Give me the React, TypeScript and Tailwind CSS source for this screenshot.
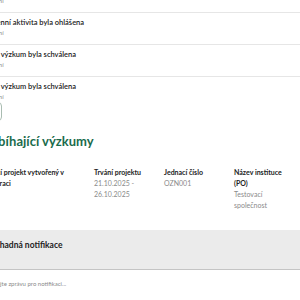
import React from 'react';

const notifications = [
  { title: 'Systémová aktualizace', meta: 'Upozornění' },
  { title: 'Zadržovenní aktivita byla ohlášena', meta: 'Upozornění' },
  { title: 'Žádost o výzkum byla schválena', meta: 'Upozornění' },
  { title: 'Žádost o výzkum byla schválena', meta: 'Upozornění' },
];

const columns = [
  { label: 'Testovací projekt vytvořený v administraci', value: '' },
  { label: 'Trvání projektu', value: '21.10.2025 - 26.10.2025' },
  { label: 'Jednací číslo', value: 'OZN001' },
  { label: 'Název instituce (PO)', value: 'Testovací společnost' },
];

export default function App() {
  return (
    <div className="w-[300px] h-[300px] overflow-hidden bg-white font-['Lato',sans-serif] text-[#222]">
      <div className="-ml-[32px] w-[400px]">
        {/* notifications */}
        <div className="-mt-[19px]">
          {notifications.map((n, i) => (
            <div
              key={i}
              className={`pt-[5px] pl-[2px] ${i < notifications.length - 1 ? 'pb-[7px] border-b border-[#e6e6e6]' : 'pb-0'}`}
            >
              <p className="text-[7.5px] leading-[10px] font-semibold">{n.title}</p>
              <p className="ml-[3px] text-[6px] leading-[9px] text-[#8a8a8a]">{n.meta}</p>
            </div>
          ))}
        </div>

        <button className="block mt-[1px] h-[19px] w-[34px] rounded-[4px] border border-[#a9bcb1] text-[7px] text-[#1a6b4c]">
          Více
        </button>

        <h2 className="mt-[12px] pl-[10px] text-[13px] leading-[16px] font-bold text-[#1a6b4c]">
          Probíhající výzkumy
        </h2>

        <div className="mt-[18px] grid grid-cols-[113px_62px_62px_55px] gap-x-[8px] pl-[5px]">
          {columns.map((c, i) => (
            <div key={i} className="text-[7px] leading-[11px]">
              <p className="font-bold text-[#222]">{c.label}</p>
              {c.value && <p className="text-[#8a8a8a]">{c.value}</p>}
            </div>
          ))}
        </div>

        <div className="mt-[19px] h-[40px] bg-[#ebebeb] border-b border-[#c4c4c4] pt-[9px] pl-[21px]">
          <p className="text-[8.5px] leading-[12px] font-bold text-[#222]">Náhadná notifikace</p>
        </div>

        <div className="pt-[9px] pl-[19px] text-[6px] leading-[9px] text-[#8a8a8a]">
          Zadejte zprávu pro notifikaci...
        </div>
      </div>
    </div>
  );
}
